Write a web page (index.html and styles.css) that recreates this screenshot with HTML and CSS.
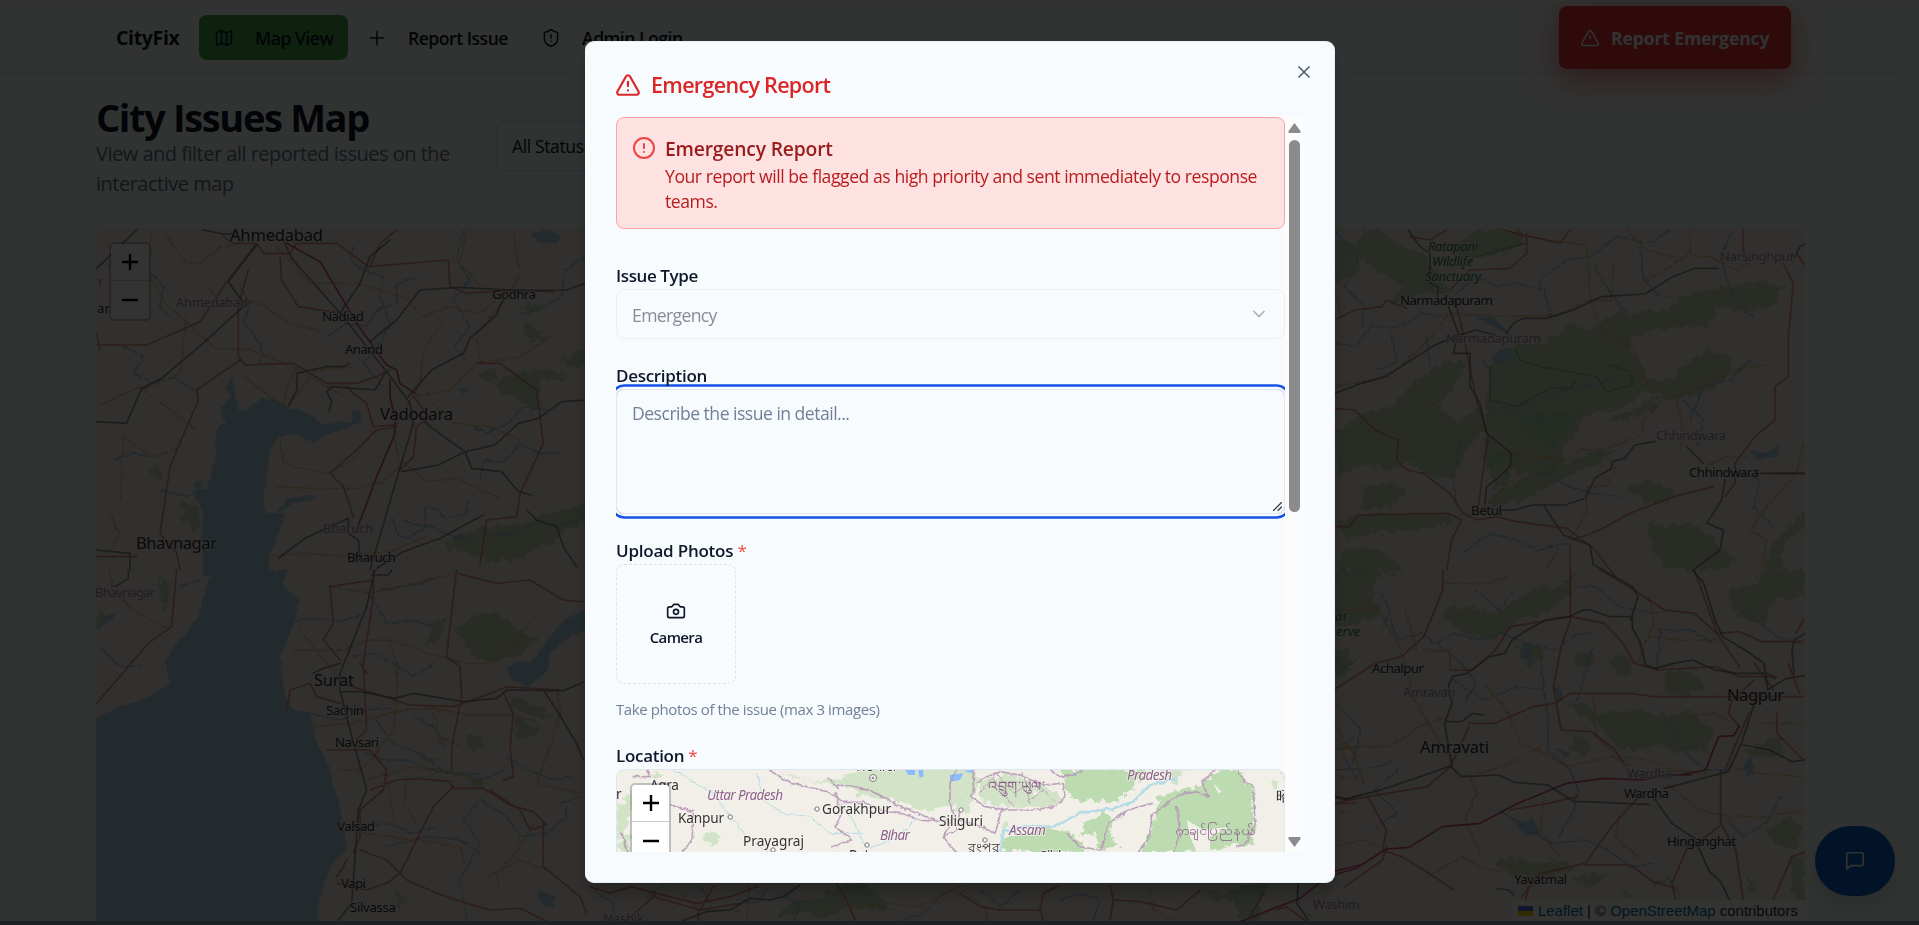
FILE: index.html
```html
<!DOCTYPE html>
<html lang="en">
<head>
<meta charset="utf-8">
<title>CityFix</title>
<link rel="stylesheet" href="styles.css">
</head>
<body>
<div class="page">
  <header class="topbar">
    <div class="brand">CityFix</div>
    <nav class="nav">
      <a class="nav-item active"><svg class="ico" viewBox="0 0 24 24"><path d="M14.1 5.55a2 2 0 0 0 1.8 0l3.65-1.83A1 1 0 0 1 21 4.62v12.76a1 1 0 0 1-.55.9l-4.55 2.27a2 2 0 0 1-1.8 0l-4.2-2.1a2 2 0 0 0-1.8 0l-3.65 1.83A1 1 0 0 1 3 19.38V6.62a1 1 0 0 1 .55-.9l4.55-2.27a2 2 0 0 1 1.8 0zM15 5.76v15M9 3.24v15"/></svg><span class="t-map">Map View</span></a>
      <a class="nav-item report"><svg class="ico" viewBox="0 0 24 24"><path d="M4 12h16M12 4v16"/></svg><span class="t-rep">Report Issue</span></a>
      <a class="nav-item"><svg class="ico" viewBox="0 0 24 24"><path d="M20 13c0 5-3.5 7.5-7.66 8.95a1 1 0 0 1-.67-.01C7.5 20.5 4 18 4 13V6a1 1 0 0 1 1-1c2 0 4.5-1.2 6.24-2.72a1.17 1.17 0 0 1 1.52 0C14.51 3.81 17 5 19 5a1 1 0 0 1 1 1zM12 8v4M12 16h.01"/></svg><span class="t-adm">Admin Login</span></a>
    </nav>
    <button class="emergency"><svg class="ico" viewBox="0 0 24 24"><path d="m21.73 18-8-14a2 2 0 0 0-3.48 0l-8 14A2 2 0 0 0 4 21h16a2 2 0 0 0 1.73-3M12 9v4M12 17h.01"/></svg><span>Report Emergency</span></button>
  </header>
  <main class="main">
    <div class="heading">
      <div class="heading-text">
        <h1>City Issues Map</h1>
        <p>View and filter all reported issues on the interactive map</p>
      </div>
      <div class="status-filter">All Statuses</div>
    </div>
    <div class="citymap">
      <svg class="map-art" viewBox="96 228 1709 693" preserveAspectRatio="none">
        <defs>
          <filter id="ragged" x="-5%" y="-5%" width="110%" height="110%"><feTurbulence type="fractalNoise" baseFrequency=".05" numOctaves="4" seed="4"/><feDisplacementMap in="SourceGraphic" scale="34" xChannelSelector="R" yChannelSelector="G"/></filter>
          <filter id="wavy" x="-5%" y="-5%" width="110%" height="110%"><feTurbulence type="fractalNoise" baseFrequency=".06" numOctaves="3" seed="9"/><feDisplacementMap in="SourceGraphic" scale="12" xChannelSelector="R" yChannelSelector="G"/></filter>
        </defs>
        <rect class="land" x="96" y="228" width="1709" height="693"/>
        <g transform="translate(80 220) scale(.33333)">
          <g class="wood">
            <path d="M1090 970l70-30 60-20 120-10 60-30 60-10 60-30v70l-60 20-40 40-60 20-50 30-90 5-60-30-60-10z"/>
            <path d="M1240 490l60-30 90-10 70 10-20 20-60 0 0 60-20 30-40-30-50-20z"/><path d="M1330 310l40 10 30 35-50 10-25-20zM1320 260l60-10 15 25-50 5zM1440 420l80-40v50l-60 15zM210 740l40 10 5 30-30 0zM1200 460l40-10 10 25-35 10z"/>
            <path d="M300 840l50 20 15 60-25 10-25-20z"/>
          </g>
          <path class="water" d="M370 1070l-5-110 5-80-25-50 5-25 30 0 15-50 15-60-5-60 50-50 50-20 40-30 50 5 30 25 60 10 50 50-30 45-70-30-40 10-25 40-10 80-10 70 5 40 60 0-20 60-30 80 5 50zM430 600l-5-35 30-40-20-20 20-40 10 50 10 50-15 40zM715 620l40-15 60 5 5-40 20 5 5 30-50 20-60 20-20 20zM590 870l35-35 60-10 30 10-80 15-35 30zM340 800l10-18 15 0-5 25zM1350 40l60-10 30 20-10 20-60-5zM1130 500l40 10-20 12z"/>
          <g class="river">
            <path d="M1515 895l-80 20-60-10-80 40-50-5-80 15-60-10-60-30-60 40-30-10-20-50M965 900l70 20 0-60 40 10 20 25 60-10 10-40M820 80l-10 40 40 30 60 20-10 60 30 80-30 60-50 60 60 70M480 200l30 50-20 60 30 30 30 60-10 30M740 350l60-40 60 10 30-50 60-20 0-60 70-20M130 380l60 30-30 50 60 30 60-20 60 40M1515 110l-60 40-10 80-70 40-60 10M1440 700l-60 0-60-30-50 60-60-10-10 60M1180 620l40 20 60-30 50-50 70 10M240 810l80 20 40-20M80 130l60 40 60-30 50 60-10 60 30 30M100 720l60-20 60 10M1150 30l-20 90 40 60-50 60 50 80-50 60 40 40"/>
          </g>
          <g class="minor">
            <path d="M215 30l-10 130 60 100 70 60 70 65 110 5 120 50 160 90M260 50l60 80 40 0 60-50 60-10M590 80l100 110 140 0 140 40 60 60 80-30 90 20 90-70M625 560l80-110 120-10M480 460l130 100 10-60 30-60M180 510l120-50 20-180M50 560l130-60 170 130M120 840l10-190 80 60 80-20M600 660l10 70 130 30 80-40 60-90M590 800l120 5 120 0 80-20 60-60 70 60 90-10 130 60M960 750l-20-120 80-140 10-100 60-90M1200 430l-10-90 60-70 70-100-20-140M1160 30l-20 100 60 70M1000 530l110-20 80-80 130-20 90-60M560 1010l110-10 140 10 130-20 100-40M1060 550l60 60 110 10 90 40M90 880l30 60-50 80M380 200l40 40 120 10 90 60 110 30"/>
          </g>
          <g class="major">
            <path d="M50 375h150l160-70 80-120 90-115M430 50l30 20h70l20 30h80l20-30h120l95 70 240-20 5 80 50 20 140-10 120 5M870 140l30-70 50-40M505 150l-30 110 0 150 20 25 145-5 100 60 90 0 60-20 40-20M480 420l-130 90 5 30-30 70-55 130-30 200 50 60 10 50M50 340l10 50M600 110l5 70 50 80 130 20M800 500l20 20 40 30 20 70 60-5M950 620l-60 10-60 60-80 70 40 40 30 90M1000 530l50 60-40 30-10 90-40 40M1190 430l70 0 110 80 20 160-70 150-10 70-90 10-20 130M50 1010l120 0"/>
          </g>
          <path class="mway" d="M620 70l100 55 60 100 60 100 80 110 30 15 10 40 45 30M930 480l0 50 15 70 0 40-55 130-60 160"/>
          <g class="rail"><path d="M50 145l120-115M370 30l60 12h40M530 75l-85 110 50 70-120 110-130 110-60 30-45 105-90-5M610 60l25 55 150 170 150 190 55 75 10 60-45 150-85 290M780 280l60-90 30-80 60-50M870 365l80-65 70-90 120-8 180 10 140-2 60-22M985 530l70-80 95-50 20-45 80-70 20-50M915 460l-30 50-130-10-15 15 15 30-8 30M625 560l25-50 0-50 90-20 50 0 20-10M1000 570l50 50 105 75 20 50 90 10 50 60 40 10M965 755l110-20 80-40 90-20 70-65 60-15 70-50 70-5M595 1015l80-60 130-60 0 45 30 20 5 60M50 990l100 10 0 50M890 1045l80-50 110-40 130-70M1340 870l30 30 60 20 20 60 40 60"/></g>
        </g>
        <g transform="translate(80 570) scale(.33333)">
          <g class="wood"><path d="M1130 180l40-40 70-20 80 60 50 30-60 50-60 10-60 0-40-50zM1280 375l60 20 50 20 30 30-60-5-60-30zM1310 450l70 20-20 30-50 5zM1150 500l50-10 10 40-30 15zM1170 630l40 0 0 25-30 0zM1010 560l60 5-10 20zM1060 150l40-10-20 70-50 20zM240 20l30 20-10 80-20-30zM50 120l30 20-20 30zM940 960l50 30-30 30z"/></g>
          <path class="water" d="M30 460l80-50 80-20 80-50-15-60 20-40 80-100 20-80 30-60h215l-10 50 50 40-20 80-40 90 15 120 25 40 50 5 20 90 40 80 10 60 20 50 5 60 18 65-40 45-20 40-20 50-10 50v110H30zM1280 290l40-20 30 10 60-80 40-50 65-30v60l-60 30-50 50 0 40-60 50-50-20zM50 165l20-25 40-10-30 30-30 20zM1370 960l60 20-10 30-30 0z"/>
          <g class="river"><path d="M820 260l60-10 60 30 60 40 60-40M640 150l80-5 60 10 60-20M900 60l120-20 60-20M880 440l60 80 80 30 80 60 100 0M690 430l90 20 80-30 70-5M860 550l60 20 60 0 80 30 80 10 70 20 60-30M830 770l100-10 60 30 80-20M920 830l120-30 100 10 60 40M1000 440l60 30 30 60M1280 560l60 40 80 30 60-10M1440 700l60-20M1160 1050l-20-120 60-110-50-70 50-60 80 50 40 60 80-10 60-50 0-30M60 230l60 60 60 0M300 50l60-20M860 60l60 100 80-10 60 20"/></g>
          <g class="minor"><path d="M750 50l120 20 130-30 130-30M640 240l150 0 80-30 70 0 100 40 120 30 60 0 90-60 50-80M660 180l80 100 50 60M950 300l0 100-10 80-60 80M930 220l30 80M690 470l130-10 140-40 100-5 110 20 120 0 80 20M1060 430l20 70 60 30M1430 350l10 80-30 100-40 110 130 30M860 630l140-40 110 20 110 30M780 600l60 0 60-60M940 750l-20-140M980 620l-10 80 40 60M850 790l160 20 130 20 10 40M1230 920l60-50 80-120M90 0l10 60 60 60 110 60M1400 900l-80-30-70 40 10 60"/></g>
          <g class="major"><path d="M290 0l-15 170-70 50-60 70-95 110M880 0l0 80-30 200 10 200-30 30M880 30l-130 20 10 110-30 50 50 60M1130 0l-10 80-20 180 40 30 5 90-30 150 0 70M620 420l10-60 60-20 20 40 70 20M780 340l70 20 140 45 130 5 60-20 100-40 160 10M840 280l20 30M1270 370l30 60-10 100 10 90-30 10M740 540h130l50 60-10 60-70 60 0 80-20 50M870 660l80-30 60-5 100 10 10 20 90 0 80 50 70 20 40 40-50 15-30-60-90-60M1120 650l-60 60-50 100-50 100M840 840l80 30 60 60 90 40 90 30 70 20 90-5 60 30 60 30M1130 10l120 30 100-10 100 60 60 5M1390 760l0 130 110 90 20 50M770 920l20-30 10-20M770 940l90 20 60-20 40-30"/></g>
          <g class="rail"><path d="M885 0l-25 110-80 200 0 50 30 120 50 180-25 60-20 280-40 50M780 365l60 0 105 20 55-15 150 25 100-10 30-25 170 2 60-25M700 310l30-15 50-15M145 0l0 25-40 25M935 0l-10 15-50 0M1390 360l40 60 60 100 20 50"/></g>
        </g>
        <g transform="translate(1330 220) scale(.33333)">
          <g class="wood">
            <path d="M100 30l50 0 70 50 50 15 60 60 20 70-60-10-40 20-50-50-70-40-50-50z"/><path d="M15 60l70 10 10 90-80 30z"/>
            <path d="M370 80l70-50h140l0 40-60 30-110 20z"/>
            <path d="M480 440l60-60 100-10 80-60 60 20 70-50 60 0 90-10 80-50 100-20 120-20 60 20-20 50-80 30-90-20-40 60-80 0-90 10-60 30 20 60 40 60 60 0 60-60 60-30 70 30-30 70-100 40-60 10-70-30-80 60-60 0-70 30-60 60 30 60-60 50-80-10-40-40-60 30-10-60z"/>
            <path d="M15 640l80-60 90-20 80-90 90-50 60 10-50 70-40 60 60 50 60-50 30 60-60 60-40 90-70 0-60-40-80 20-60-20-80 40zM470 720l50-30 50 40-40 60-40 20z"/>
            <path d="M470 850l60-50 120-60 60-10 80-40 70 0-80 50-90 40-110 60-90 20zM840 590l70-20 60-40 20 30-70 30-60 20zM890 800l60-20 80 30-20 40-60 0zM15 910l90-30 100 0 150 0 20 30-120 20-120 10-80 20zM950 900l60 20 80-10 60 50 60 60-20 30h-180l-40-60zM1300 1050l30-80 95-100v60l-60 30-10 90zM15 1050l20-60 90-10 90 60 0 20zM180 250l20-40 50 0 0 40zM100 800l80-10 60 20-60 50-80 10zM560 600l80-20 120 0-20 60-50 60-70-40z"/>
          </g>
          <path class="water" d="M485 410l40-30 30 20-20 30-40 0zM430 290l60 0 40 40 20 20-60-30zM1260 690l50 10 40-30-10 40-60 10z"/>
          <g class="river"><path d="M15 370l60 10 50-60 90 0 60-40 60 10M380 220l60-50 60 30 60-10 70 20 0-30 80-60 70-10 80-60 100 20 60-40M460 420l30 60-10 60 90 20 90-40 100-20 90-20M640 200l20 80 30 20M790 130l40 70 60 80M930 60l10 120 50 50 30 0M460 590l60-30 120 50M1080 600l40-100 80-20 60-60M1060 540l60 60-20 80M640 760l80 40 70 20 80 10M400 1000l80-60 80 20 60 30 90-20M1330 920l-60-60 20-80-80-40M1210 30l-40 80 40 120 60 60M180 330l20 100-60 20M290 350l10 90M15 30l70 90-40 80 60 60-10 60M380 860l-10-80 20-120"/></g>
          <g class="green"><path d="M440 110l145-40M555 385l15 35 60 20 170 30 30 45 80-20-10-40-60-20M480 440l0 100 80 20 100-55 60 0 20-25"/></g>
          <g class="minor"><path d="M15 500l160-30 80-70 60-60 40-60 180 10 150-5 60-30 40-15 60 0 5-110M530 40l240 35 10 150 30 100 100 60 60 150h60l80-30 120-60 80-10M1080 30l0 70-60 40-100 60M890 30l60 60 80 20 110 0 80 40 80-50M530 700l180 20 40-30 80-5 110-40-5-40 60-60M1040 540l20 100-10 60M770 800l60 0 30-60M720 960l50-80 0-80M1420 670l-20 90-80 90-60 80 50 30-15 90M460 860l100-90 10-60M690 970l-40 80M1130 740l60-30 60 0M15 210l20 80"/></g>
          <g class="major"><path d="M240 50l60 10 50-30M520 30l60 15 110 25 30-40M590 40v60l-50 45-120 5-60 60M15 300l60-30 80-10 15-20 60 25M380 260l20 80 15 80 25 120 35 110-10 60-20 150M15 565l60 5 60 60 70 30-5 60 30 30 50 10 80 60 40 60 40 20 60-10 60 15 150 20 80 60 70 90M15 920h40l30-35 270-5 40 20-30 60-15 90M730 960l80-30 90-50 130-50 120-30M1240 30v60l10 20M1360 130l30 60-15 160 0 120-40 30 0 100-60 50-60 80 0 60-30 40M1400 100l25 35M1330 760l95 0M720 970v80"/></g>
          <g class="rail"><path d="M235 30l35 50 30 20 0 90 25 10-2 30M355 260l15 40 15 40-15 60 50 0 0 100 30 50 20 90 75 60-5 40-30 30-40 30-5 50M15 520l80-30 70-20 150-95 60-25 60-20 60 15M530 340l20-30 30-15h70l80-25 85-40 130-8 80-50 70-27h70M1395 110l15-30 15-8M515 870h40l50-15 100 0 60-20 30-60 50-30 0-20 40-10 30-40 60-10M1070 680l50 50M1290 760l135 0M640 855l60 90 80 30 10 60 30 15M1185 780l-10 60-45 70 50 20-10 60-80 60"/></g>
        </g>
        <g transform="translate(1330 570) scale(.37565 .33333)">
          <g class="wood"><path d="M10 0h130l-30 60 30 80-130 40zM300 110l80 0 60 20 90-70 80-10 50-50-20 70-60 60-80 20-60 60-80-20-50-40zM10 240l40 0 10 50-50 20zM500 230l60-10 10 50-40 20zM650 240l60 20-20 40-40-20zM740 270l40-20 30 60-40 10zM890 310l60-10 50 50-50 30-60-10zM620 400l60 0 30 30 110-10 80 20 60-20 60 60-10 60-90 10-40-30-50 20-60 0-60-80-30-20zM650 490l50 40-20 30-40-20zM1060 60l80-20 0-40h125v80l-80 10-30 70-70-20zM1100 540l100-40 0 60-80 0zM1160 780l60-40 40 40-20 60-60-20zM1230 860l35 0v140l-40-30zM430 870l60-10 60 20 80-10 20 30-80 20-80 0zM640 930l60-20 40 10-50 30zM770 970l30-10 10 30zM1100 910l40 30-20 30z"/></g>
          <path class="water" d="M510 210l20 20 10 50-30-20zM480 740l40 20 20-20 20 50-40 10zM600 530l40 20-10 15zM1100 590l20-30 10 50-20 10zM595 350l20 0 5 40-15 10z"/>
          <g class="river"><path d="M160 150l20 60 60-20 40 30 50-30 70 20 60-20 80 40 60 10 60-50 40 0M260 200l90 80 40 60-40 70M390 60l60 60 40-60M560 260l20 200 0 80 60 60 20 60-10 60-40 80M180 600l-60 60 60 70-60 40M10 600l100-5 60-20M450 720l80 60 60 40 90-10 60 30 60 50 60-10M700 230l-40 160M870 300l10-120 80 0 60 40M880 420l60 120 60 60 60 0M1060 750l40 50 60-40 40-80M860 950l40-30 30 60M20 400l60 80-20 100M130 60l30 60-20 60M650 50l60 0 60 60 90 20 50-10M330 330l80 60 90-40 70 10M1100 120l90 80 60 20"/></g>
          <g class="minor"><path d="M10 120l120 0 60 120 30 140 90 170M10 540l60-10 90 0 80-60 70-30M60 540l-60-90M60 540l30 100M300 40l120 0 50-20M250 240l70 0 0 60M410 340l60 80 40 100 60 30 60 40 120-30 60 30M390 610l70-20 100-60M700 380l10 120 60 60 80 10 60 30 90 10M820 280l40-120-10-80M850 200l100 10 80 0M900 640l80 80 90 20 90 0 100-20M370 610l20 60-30 80 40 100M570 680l-10 100 50 80M960 440l60-10 40 20M1060 590l80 20 120 10M1150 460l110 0M10 830l80-20 60 30M260 920l90-60 50 30 80 20M770 740l-10 60 60 60M200 120l30 120"/></g>
          <g class="major"><path d="M300 0l0 60-50 140-60 60-70 20-110 80M320 300h60l60-60 40-70 160-30 90 20 50 60 30 60 60 20 160-10 60 30 100 0M640 0v150l-25 80-20 120 20 130 80 5 60 50 30 50M720 0l90 60 80 60 80 10 60 60 60-5 60 30h110M970 0l60 190 60 100M370 460l70 0 100-50 60-10 40-30 160 0 60 10h400M1130 330l-60 60-10 40 30 40M1130 280l50 80M1220 280l30 90M1240 190l20-40M10 700l90-20 160-30 60-60 50-120M100 680l50 100-10 60 50 20 60 40 80 60M150 830l-10 40-100 80M480 720l100-20 80-20M830 670l-80 100-70 110-120 30-50 70M680 885h60l60 0 60 50 60 20M960 810l-50 130 10 50M1040 600l0 160 40 80 20 150M1190 430l0 60 70 80M1180 990l50-130 35-15M1115 430l-60 160M1035 770l-70 60M530 950l-10 40"/></g>
          <path class="mway" d="M10 915l60-20 80-58 60-5 90-62 100-10 100-60 130-60 100-15 100 5 60-15 70 0M930 615l70-15 20-60 15-40 40-3 15-30"/>
          <g class="rail"><path d="M10 680l30 8 100-30 80-30 100-40 30 32 100-5 40 22 90 8 70 50h30l100 5 70 3M325 590l-20-130 20-60-10-50 10-30 40-10 60-50 40-10 20-40 40-30 50-30 60-10 40-20h20l50 20 60 0 0 35 20 40 15 70 25 10 50-15 50-10 60 30 60 10 80 0 20 15M725 0l80 50 15 30-20 70M965 0l30 40 30 110 20 50 60 40 50 40 10 80 50-35 60-10M1265 190l-30 20-5 40 5 60M310 455l40 0 30-25 30 5M1130 400l-35 120-35 85-170 50M1100 525l70 15 60 35 35-5M860 680l50 80 60 45 40 100 30 30 30 70M445 955l30 5 15 15"/></g>
        </g>
        <g transform="translate(590 660) scale(.33333)">
          <path class="wood" d="M550 770l60-50 90-10 60-40 60 0 60 50 20 30-120-5-70 30-60-20z"/>
          <g class="river"><path d="M10 690l60 40 0 60M170 710l60-40M440 720l60 10 30-40M330 670l30 60M570 700l60 40-20 50M920 790l80-30 60-60"/></g>
          <g class="minor"><path d="M480 670l-10 120M270 700l60 50 120 0M770 750l120-20 90 10 130-60"/></g>
          <g class="major"><path d="M0 680l60 20 60-20 80 20 120 30 100-20 80-30M200 700l-100 90M190 710l140 40 40-70M325 750v35M740 670l30 50 30 70M330 750l120-20"/></g>
          <path class="rail" d="M270 785l80-30 70-5 60-35 60 5 40-10 50-35"/>
        </g>
        <g transform="translate(960 660) scale(.33333)">
          <path class="wood" d="M730 690l60 10 80-30 60 0-30 60 0 60-60-20-20-50-60 0zM1125 0l60 30-50 20z"/>
          <g class="river"><path d="M60 690l60 50 60-50M300 720l60-20 60 20-20 60M1015 690l0 50 40 30M1180 230l-40 30 30 60 20 40M1190 0l-60 40"/></g>
          <g class="minor"><path d="M10 690l70 60 0 40M570 690l10 60 60 30M1130 460l60-10M1140 350l50 5M1125 230l70 60"/></g>
          <g class="major"><path d="M0 700l60 40 60 10 120 0 10-50 40-20M240 740l10 45M450 680l10 40-10 60M460 720l80 5 110 25 70-60M870 770l40-70M950 750l30-10 60 45M1125 430l60 0"/></g>
          <path class="mway" d="M840 785l180-70 100-80 80-20"/>
          <path class="rail" d="M1125 410l40 8 40-15M1015 670l-5 60 35 50"/>
        </g>
        <g class="labels">
          <g font-size="16.5"><text x="230" y="241" textLength="93">Ahmedabad</text><text x="380" y="420" textLength="73">Vadodara</text><text x="136" y="549" textLength="81">Bhavnagar</text><text x="314" y="686" textLength="40">Surat</text><text x="1420" y="753" textLength="69">Amravati</text><text x="1727" y="701" textLength="57">Nagpur</text></g>
          <g font-size="13.3"><text x="492" y="299" textLength="44">Godhra</text><text x="322" y="321" textLength="42">Nadiad</text><text x="345" y="354" textLength="38">Anand</text><text x="347" y="562" textLength="49">Bharuch</text><text x="326" y="715" textLength="38">Sachin</text><text x="335" y="747" textLength="44">Navsari</text><text x="337" y="831" textLength="38">Valsad</text><text x="341" y="888" textLength="25">Vapi</text><text x="350" y="912" textLength="46">Silvassa</text><text x="97" y="313">ar</text><text x="1400" y="305" textLength="93">Narmadapuram</text><text x="1471" y="515" textLength="31">Betul</text><text x="1689" y="477" textLength="70">Chhindwara</text><text x="1372" y="673" textLength="52">Achalpur</text><text x="1624" y="798" textLength="45">Wardha</text><text x="1667" y="846" textLength="69">Hinganghat</text><text x="1514" y="884" textLength="53">Yavatmal</text></g>
          <g font-size="13" class="district"><text x="176" y="307" textLength="72">Ahmedabad</text><text x="323" y="533" textLength="50">Bharuch</text><text x="95" y="597" textLength="60">Bhavnagar</text><text x="98" y="286">r</text><text x="1446" y="343" textLength="95">Narmadapuram</text><text x="1720" y="261" textLength="75">Narsinghpur</text><text x="1656" y="440" textLength="70">Chhindwara</text><text x="1403" y="697" textLength="52">Amravati</text><text x="1627" y="778" textLength="45">Wardha</text><text x="1313" y="909" textLength="47">Washim</text><text x="603" y="923" textLength="41">Nashik</text></g>
          <g font-size="13" class="park"><text x="1428" y="251" textLength="50">Ratapani</text><text x="1432" y="266" textLength="41">Wildlife</text><text x="1425" y="281" textLength="56">Sanctuary</text><text x="1335" y="621">at</text><text x="1336" y="636">erve</text></g>
        </g>
      </svg>
      <div class="zoomctl"><span><svg viewBox="0 0 16 16"><path d="M0 8h16M8 0v16"/></svg></span><span><svg viewBox="0 0 16 16"><path d="M0 8h16"/></svg></span></div>
      <div class="attribution"><svg class="flag" viewBox="0 0 12 8" preserveAspectRatio="none"><path fill="#4C7BE1" d="M0 0h12v4H0z"/><path fill="#FFD500" d="M0 4h12v4H0z"/></svg><span><a>Leaflet</a> | © <a>OpenStreetMap</a> contributors</span></div>
    </div>
  </main>
  <button class="chat"><svg class="ico" viewBox="0 0 24 24"><path d="M21 15a2 2 0 0 1-2 2H7l-4 4V5a2 2 0 0 1 2-2h14a2 2 0 0 1 2 2z"/></svg></button>
</div>
<div class="overlay">
  <section class="dialog">
    <svg class="close" viewBox="0 0 24 24"><path d="M18 6 6 18M6 6l12 12"/></svg>
    <h2 class="dialog-title"><svg viewBox="0 0 24 24"><path d="m21.73 18-8-14a2 2 0 0 0-3.48 0l-8 14A2 2 0 0 0 4 21h16a2 2 0 0 0 1.73-3M12 9v4M12 17h.01"/></svg><span>Emergency Report</span></h2>
    <div class="scroller">
      <div class="form">
        <div class="alert">
          <svg viewBox="0 0 24 24"><circle cx="12" cy="12" r="10"/><path d="M12 8v4M12 16h.01"/></svg>
          <div><h3>Emergency Report</h3><p>Your report will be flagged as high priority and sent immediately to response teams.</p></div>
        </div>
        <div class="field first">
          <label class="l-type">Issue Type</label>
          <div class="select"><span>Emergency</span><svg viewBox="0 0 24 24"><path d="m6 9 6 6 6-6"/></svg></div>
        </div>
        <div class="field">
          <label class="l-desc">Description</label>
          <div class="textarea"><span>Describe the issue in detail...</span><svg class="grip" viewBox="0 0 9 9"><path d="M.5 8.500 8.500.5M5 8.500l3.500-3.500"/></svg></div>
        </div>
        <div class="field">
          <label class="l-up">Upload Photos <i>*</i></label>
          <div class="camera"><svg viewBox="0 0 24 24"><path d="M14.500 4h-5L7 7H4a2 2 0 0 0-2 2v9a2 2 0 0 0 2 2h16a2 2 0 0 0 2-2V9a2 2 0 0 0-2-2h-3z"/><circle cx="12" cy="13" r="3"/></svg><span>Camera</span></div>
          <p class="hint">Take photos of the issue (max 3 images)</p>
        </div>
        <div class="field">
          <label class="l-loc">Location <i>*</i></label>
          <div class="minimap">
            <svg class="map-art" viewBox="617 770 667 220" preserveAspectRatio="none">
              <rect class="land" x="616" y="769" width="670" height="230"/>
              <g transform="translate(590 660) scale(.33333)">
                <path class="leaf pale" d="M560 330l60 25 60 10 70-10 60-30h340l20 40-30 60-60 10-60 20-60-20-80-20-70-10-50-30-80-5-60-20zM80 440l60-60 20 20-40 60-20 60-20 20zM80 560l40-40 0 60zM330 530l40-20 30 20-40 30zM1090 450l50-60v70zM170 340l50 0-10 20z"/>
                <path class="blue" d="M945 330h30v15h-20zM985 330h15v22h-12zM1080 345l40-5-10 20-30 5z"/>
                <path class="rv" d="M250 330l120 70 60 80 40 50 60 45M500 340l20 80 60 40 80 10 60 50 100 0M750 430l40 50 30 70M980 475l-60 60-80 30"/>
                <path class="bd" d="M540 332l60 35 60 15 60 15 40 30 60 0 60 25 60 10 60 20 80 0M740 375l60 5 60 20 60 35 60 25 60 20M715 355l30 30M1100 330l-20 40 0 60 10 40-30 60 40 50M735 400l20 60-20 40 50 40-60 20M130 350l50 0-10-20M240 435l70 20 0 80-40 50M95 520l20 60M1110 450l-10 60-40 20"/>
              </g>
              <g transform="translate(960 660) scale(.33333)">
                <path class="leaf" d="M310 330h260l-50 50-60 50-50-10-60 5-40-50zM130 535l80-20 60-10 60 10 50 60H125zM370 490l60-30 30 10-10 60 30 30-60 10-20-50-40 10zM590 420l60-30 70-10 60-50h60l10 30 30 20v60l0 120-60-10-60 25-60 0H540l30-60 20-60z"/>
                <path class="leaf pale" d="M60 360l80-20 60 20 80 30 30 40-60 10-110 0-80-20zM130 480l20 10-15 20zM935 365h18v15h-16zM955 335h20v20zM590 330h80l-20 40z"/>
                <path fill="#f2efe9" stroke="none" d="M760 370l25 25-10 5zM680 480l50 30 80-10-60 30 0 45h-40l-20-45zM220 390l20 10-20 10z"/>
                <path class="blue" d="M340 335l12 12-10 0zM10 332l30-2-5 10z"/>
                <path class="rv wide" d="M120 575l10-60 60-15 90 0 80-40 100-15 60-20 50-50 80-20"/>
                <path class="bd" d="M40 330l0 60-5 20 40 30 60 10 80 0 70-10 30-30-5-40-60 5-70-30-60-10-40 15-30 20M270 330l30 20 40-5 30-15M125 450l-20 70-40-20-70-20M535 575l35-50 5-60 80-60 60-10 30 15-20-40 40-40M835 330l20 40 25 5 5 120-30 60-25 5M425 570l20-80 60-40 70-20M320 520l40 40 60 10M650 440l10 80-20 55"/>
                <path class="bd thin" d="M60 400l50-60 50 60 60-40 60 60M100 360l60 80M190 340l20 90M250 390l-40 30"/>
              </g>
              <path class="dots" d="M728 817a2.200 2.200 0 1 0 4.400 0 2.200 2.200 0 1 0-4.400 0M814.800 809a2.200 2.200 0 1 0 4.400 0 2.200 2.200 0 1 0-4.400 0M864.800 845a2.200 2.200 0 1 0 4.400 0 2.200 2.200 0 1 0-4.400 0M958.800 810a2.200 2.200 0 1 0 4.400 0 2.200 2.200 0 1 0-4.400 0M770.800 850a2.200 2.200 0 1 0 4.400 0 2.200 2.200 0 1 0-4.400 0M982.800 840a2.200 2.200 0 1 0 4.400 0 2.200 2.200 0 1 0-4.400 0M869.500 778a3.500 3.500 0 1 0 7 0 3.500 3.500 0 1 0-7 0M872 778a1 1 0 1 0 2 0 1 1 0 1 0-2 0"/>
              <g class="labels" font-size="13.6"><text x="650" y="790" textLength="29">Agra</text><text x="616" y="799">r</text><text x="678" y="823" textLength="46">Kanpur</text><text x="743" y="846" textLength="61">Prayagraj</text><text x="822" y="814" textLength="69">Gorakhpur</text><text x="939" y="826" textLength="44">Siliguri</text><text x="849" y="860" textLength="36">Patna</text><text x="853" y="771" textLength="43" font-size="12">काठमाडौं</text><text x="968" y="853" textLength="32">রংপুর</text><text x="1040" y="861" textLength="38">Silchar</text><text x="1276" y="801">昭通</text>
                <g class="state"><text x="707" y="800" textLength="76">Uttar Pradesh</text><text x="880" y="840" textLength="30">Bihar</text><text x="1009" y="835" textLength="37">Assam</text><text x="1127" y="780" textLength="45">Pradesh</text><text class="upright" x="988" y="791" textLength="57" lengthAdjust="spacingAndGlyphs">འབྲུག་ཡུལ་</text><text class="upright" x="1175" y="835" textLength="80" lengthAdjust="spacingAndGlyphs">ကချင်ပြည်နယ်</text></g>
              </g>
            </svg>
            <div class="zoomctl mini"><span><svg viewBox="0 0 16 16"><path d="M0 8h16M8 0v16"/></svg></span><span><svg viewBox="0 0 16 16"><path d="M0 8h16"/></svg></span></div>
          </div>
        </div>
      </div>
      <div class="scrollbar"><svg viewBox="0 0 13 10"><path d="M6.500 0 12.800 8.500 12 10H1L.2 8.500z"/></svg><div class="thumb"></div><svg class="down" viewBox="0 0 13 10"><path d="M6.500 10 12.800 1.500 12 0H1L.2 1.500z"/></svg></div>
    </div>
  </section>
</div>
</body>
</html>
```
FILE: styles.css
```css
* { box-sizing: border-box; }
html, body { margin: 0; height: 100%; overflow: hidden; }
body { background: #f2fdf8; color: #0f172a; font-family: "Open Sans", "Noto Sans", sans-serif; font-size: 17.6px; }
h1, h2, h3, p { margin: 0; }
button { border: 0; font-family: inherit; }
svg { display: block; fill: none; stroke: currentColor; stroke-width: 2; stroke-linecap: round; stroke-linejoin: round; flex: none; }

.page { height: 925px; background: #f2fdf8; border-top: 1px solid #fff; border-bottom: 4px solid #8ea3b0; }
.topbar { display: flex; align-items: center; height: 72px; width: 1901px; padding: 2px 110px 0 115px; border-bottom: 1px solid #e2e8e6; }
.brand { width: 84px; padding-left: 1px; font-size: 19.5px; font-weight: 700; letter-spacing: -.35px; }
.nav { display: flex; gap: 4px; }
.nav-item { display: flex; align-items: center; gap: 21px; width: 149px; height: 45px; padding-left: 15px; border-radius: 8px; font-weight: 600; letter-spacing: -.5px; white-space: nowrap; }
.nav-item.report { width: 170px; }
.nav-item.active { background: #41a546; }
.ico { width: 20px; height: 20px; stroke-width: 1.8; }
.emergency { display: flex; align-items: center; gap: 11px; width: 232px; height: 63px; margin-left: auto; padding: 0 0 0 21px; border-radius: 8px; background: #e33535; color: #f8fafc; font-size: 17.6px; font-weight: 700; letter-spacing: -.15px; white-space: nowrap; box-shadow: 0 9px 30px 2px rgba(239,68,68,.6); }

.main { padding: 25px 114px 0 96px; }
.heading { display: flex; align-items: center; height: 98px; }
.heading-text { width: 400px; }
h1 { font-size: 38px; line-height: 44px; font-weight: 700; letter-spacing: -1.35px; }
.heading p { width: 370px; font-size: 20px; line-height: 30px; color: #64748b; letter-spacing: -.5px; }
.status-filter { width: 200px; height: 50px; margin-bottom: 2px; padding-left: 15px; border: 1px solid #d8dfe8; border-radius: 8px; line-height: 48px; letter-spacing: -.4px; }
.citymap { position: relative; height: 693px; margin-top: 32px; border-radius: 8px 8px 0 0; overflow: hidden; }
.map-art { width: 100%; height: 100%; }
.land { fill: #f2efe9; stroke: none; }
.wood { fill: #add19e; stroke: none; fill-opacity: .62; filter: url(#ragged); }
.water { fill: #aad3df; stroke: none; filter: url(#wavy); }
.river { stroke: #a3c6dc; stroke-width: 4; filter: url(#wavy); }
.minor { stroke: #e8b878; stroke-width: 4; stroke-opacity: .8; filter: url(#wavy); }
.major { stroke: #dc7065; stroke-width: 5; stroke-opacity: .75; }
.mway { stroke: #d0567a; stroke-width: 5; }
.rail { stroke: #777; stroke-width: 5; stroke-opacity: .8; }
.green { stroke: #8fc08a; stroke-width: 5; }
.labels text { font-family: "Noto Sans", "Open Sans", sans-serif; fill: #333; stroke: #f6f4f0; stroke-width: 2px; stroke-opacity: .7; paint-order: stroke; }
.labels .district text { fill: #a58aab; }
.labels .park text { fill: #35803a; font-style: italic; }
.labels .state text { fill: #8d618b; font-style: italic; }
.labels .state .upright { font-style: normal; stroke: none; }

.zoomctl { position: absolute; left: 13px; top: 14px; width: 42px; border: 2px solid rgba(0,0,0,.2); border-radius: 5px; background: #fff; background-clip: padding-box; color: #000; }
.zoomctl.mini { top: 13px; width: 41px; }
.zoomctl span { display: flex; align-items: center; justify-content: center; height: 38px; }
.zoomctl span:first-child { height: 37px; border-bottom: 1px solid #ccc; }
.zoomctl svg { width: 16px; height: 16px; stroke-width: 2.400; stroke-linecap: butt; }
.attribution { position: absolute; right: 0; bottom: 0; display: flex; align-items: center; gap: 5px; height: 21px; width: 293px; padding-left: 6px; background: rgba(255,255,255,.8); color: #333; font: 14.950px/20px "Liberation Sans", Arial, sans-serif; white-space: nowrap; }
.attribution a { color: #0078a8; }
.flag { width: 15px; height: 10px; stroke: none; }
.chat { position: absolute; left: 1815px; top: 826px; display: flex; align-items: center; justify-content: center; width: 80px; height: 70px; padding: 0; border-radius: 35px; background: #0c62c4; color: #f8fafc; box-shadow: 0 10px 16px rgba(0,0,0,.12); }
.chat .ico { width: 22px; height: 22px; }

.overlay { position: fixed; inset: 0; display: flex; align-items: flex-start; padding: 41px 0 0 585px; background: rgba(0,0,0,.8); }
.dialog { position: relative; width: 750px; height: 842px; padding: 30px 31px; border: 1px solid #e8eef5; border-left: 0; border-radius: 9px; background: #f7fbfe; box-shadow: 0 11px 17px -3px rgba(0,0,0,.3); }
.close { position: absolute; right: 20px; top: 20px; width: 20px; height: 20px; color: #556070; }
.dialog-title { display: flex; align-items: center; gap: 10px; height: 28px; margin: -1px 0 18px; color: #dc2626; font-size: 21.500px; font-weight: 600; line-height: 28px; letter-spacing: -.68px; white-space: nowrap; }
.dialog-title svg { width: 26px; height: 26px; margin-left: -1px; }
.scroller { display: flex; width: 688px; height: 735px; overflow: hidden; }
.form { width: 669px; overflow: hidden; }
.alert { display: flex; gap: 9px; height: 112px; padding: 16px 15px; border: 1px solid #fca5a5; border-radius: 8px; background: #fee2e2; color: #ef4444; }
.alert svg { width: 24px; height: 24px; margin-top: 2px; }
.alert h3 { font-size: 19.300px; line-height: 30px; font-weight: 600; color: #991b1b; letter-spacing: -.18px; }
.alert p { width: 600px; line-height: 25px; color: #b91c1c; letter-spacing: -.45px; }
.field { margin-top: 25px; }
.field.first { margin-top: 35px; }
.field label { position: relative; z-index: 1; display: block; height: 22px; margin-bottom: 3px; font-size: 17px; line-height: 24px; font-weight: 600; letter-spacing: -.3px; }
.field .l-type { letter-spacing: -.4px; }
.field .l-up { letter-spacing: -.22px; }
.field .l-loc { line-height: 22px; }
.field label i { font-style: normal; font-weight: 400; color: #ef4444; }
.select { display: flex; align-items: center; justify-content: space-between; height: 50px; padding: 0 15px; border: 1px solid #eaeff4; border-radius: 8px; color: #878d97; letter-spacing: -.65px; }
.select span { padding-top: 2px; }
.select svg { width: 20px; height: 20px; color: #aab0b8; margin-top: -1px; }
.textarea { position: relative; height: 125px; padding: 11px 15px; border: 1px solid #e2e8f0; border-radius: 8px; color: #718096; line-height: 24px; letter-spacing: -.52px; box-shadow: 0 0 0 2.200px #f7fbfe, 0 0 0 4.800px #1452e8; }
.grip { position: absolute; right: 2px; bottom: 2px; width: 9px; height: 9px; color: #333; stroke-width: 1.200; }
.camera { display: flex; flex-direction: column; align-items: center; justify-content: center; gap: 5px; width: 120px; height: 120px; border: 1px dashed #dbe3ec; border-radius: 8px; font-size: 15px; line-height: 22px; font-weight: 600; letter-spacing: -.65px; }
.camera svg { width: 20px; height: 20px; }
.hint { margin-top: 14px; font-size: 15px; line-height: 22px; color: #718096; letter-spacing: -.4px; }
.minimap { position: relative; height: 222px; margin-top: -1px; border: 1px solid #dbe6f0; border-radius: 8px; overflow: hidden; }
.leaf { fill: #bddbb0; stroke: none; filter: url(#ragged); }
.leaf.pale { fill-opacity: .6; }
.blue { fill: #8cbcff; stroke: none; }
.rv { stroke: #b5dbe6; stroke-width: 3; filter: url(#wavy); }
.rv.wide { stroke-width: 8; }
.bd { stroke: #b496b4; stroke-width: 5; stroke-opacity: .85; filter: url(#wavy); }
.bd.thin { stroke-width: 3; }
.dots { stroke: #777; stroke-width: 1; fill: #fff; }
.scrollbar { display: flex; flex-direction: column; align-items: center; width: 19px; padding: 6px 0 5px; background: #fcfcfc; }
.scrollbar svg { width: 13px; height: 10px; stroke: none; fill: #8b8b8b; }
.scrollbar .thumb { width: 11px; height: 372px; margin-top: 7px; border-radius: 6px; background: #8b8b8b; }
.scrollbar .down { margin-top: auto; }
```
